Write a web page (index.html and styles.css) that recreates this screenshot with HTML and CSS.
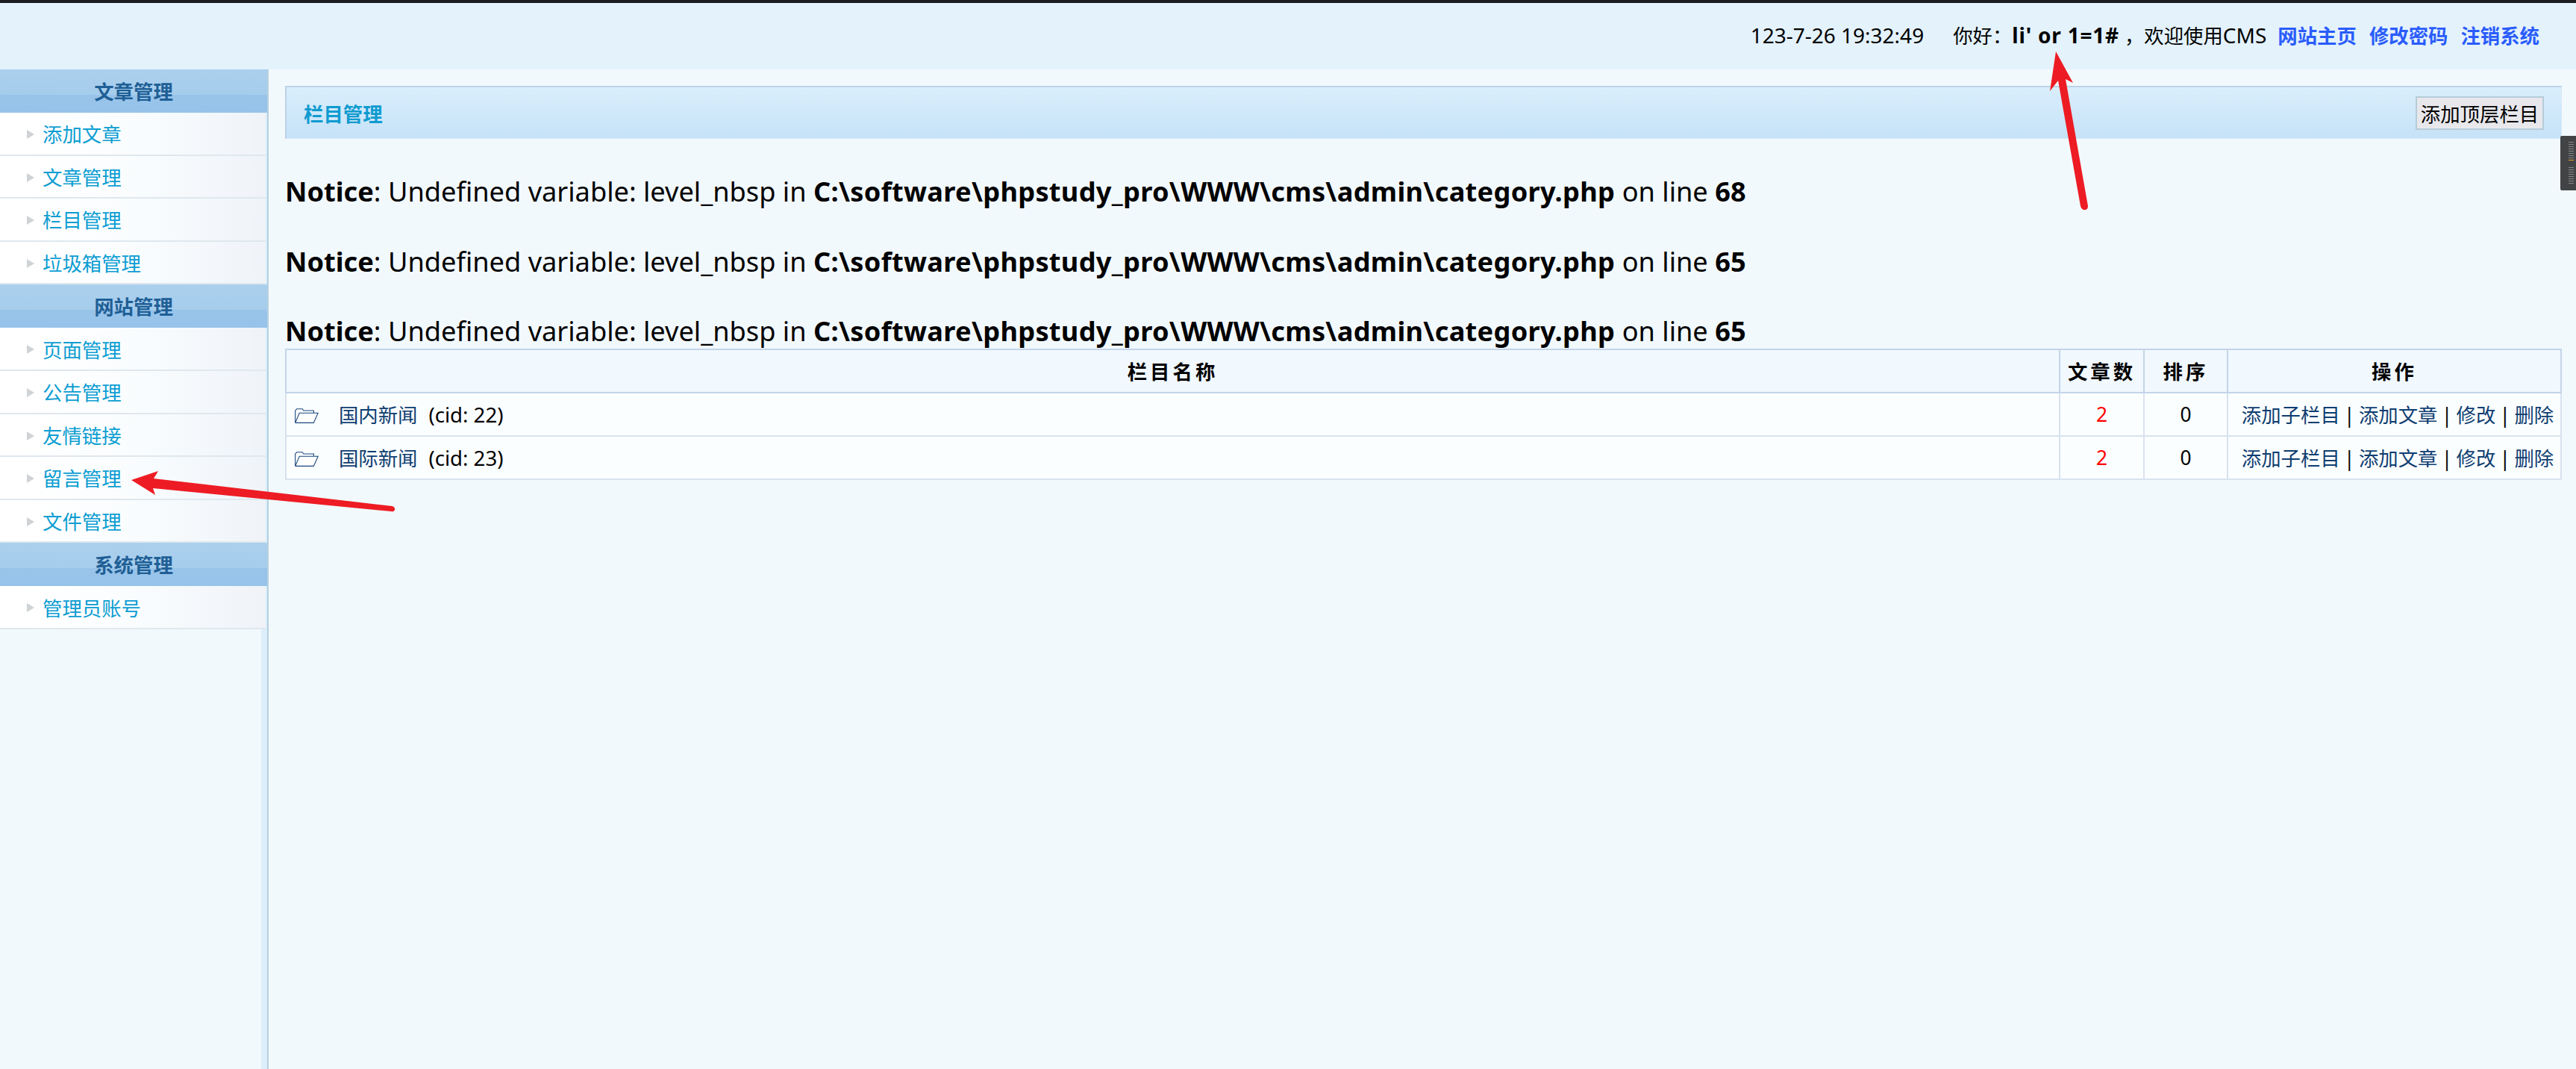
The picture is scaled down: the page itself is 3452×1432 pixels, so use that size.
FILE: index.html
```html
<!DOCTYPE html>
<html lang="zh">
<head>
<meta charset="utf-8">
<title>栏目管理</title>
<link rel="stylesheet" href="styles.css">
</head>
<body>
<header class="topbar">
  <span class="clock">123-7-26 19:32:49</span>
  <span class="greet">你好：<b class="lat">li' or 1=1#</b> ，欢迎使用<span class="lat">CMS</span></span>
  <nav class="toplinks"><a>网站主页</a><a>修改密码</a><a>注销系统</a></nav>
</header>
<div class="main">
  <aside class="side">
    <h3 class="side-head">文章管理</h3>
    <a class="side-item">添加文章</a>
    <a class="side-item">文章管理</a>
    <a class="side-item">栏目管理</a>
    <a class="side-item">垃圾箱管理</a>
    <h3 class="side-head">网站管理</h3>
    <a class="side-item">页面管理</a>
    <a class="side-item">公告管理</a>
    <a class="side-item">友情链接</a>
    <a class="side-item">留言管理</a>
    <a class="side-item">文件管理</a>
    <h3 class="side-head">系统管理</h3>
    <a class="side-item">管理员账号</a>
  </aside>
  <main class="content">
    <div class="panel">
      <span class="panel-title">栏目管理</span>
      <button class="panel-btn">添加顶层栏目</button>
    </div>
    <p class="notice"><b>Notice</b>: Undefined variable: level_nbsp in <b class="path">C:\software\phpstudy_pro\WWW\cms\admin\category.php</b> on line <b>68</b></p>
    <p class="notice"><b>Notice</b>: Undefined variable: level_nbsp in <b class="path">C:\software\phpstudy_pro\WWW\cms\admin\category.php</b> on line <b>65</b></p>
    <p class="notice"><b>Notice</b>: Undefined variable: level_nbsp in <b class="path">C:\software\phpstudy_pro\WWW\cms\admin\category.php</b> on line <b>65</b></p>
    <table class="grid">
      <colgroup><col><col class="c-num"><col class="c-ord"><col class="c-act"></colgroup>
      <thead>
        <tr><th>栏目名称</th><th>文章数</th><th>排序</th><th>操作</th></tr>
      </thead>
      <tbody>
        <tr>
          <td class="name">
            <svg class="folder" viewBox="0 0 32 20"><path d="M.7 19.4V3.2L2.6.7h7.6l1.6 2.3h13.6v3.2M.7 19.4h24.6L31.2 6.2H6.2L.7 19.4" fill="#fff" stroke="#17467c" stroke-width="1.1"/></svg>
            <a class="cat">国内新闻</a><span class="cid">(cid: 22)</span>
          </td>
          <td class="count">2</td><td class="center">0</td>
          <td class="center acts"><a>添加子栏目</a> | <a>添加文章</a> | <a>修改</a> | <a>删除</a></td>
        </tr>
        <tr>
          <td class="name">
            <svg class="folder" viewBox="0 0 32 20"><path d="M.7 19.4V3.2L2.6.7h7.6l1.6 2.3h13.6v3.2M.7 19.4h24.6L31.2 6.2H6.2L.7 19.4" fill="#fff" stroke="#17467c" stroke-width="1.1"/></svg>
            <a class="cat">国际新闻</a><span class="cid">(cid: 23)</span>
          </td>
          <td class="count">2</td><td class="center">0</td>
          <td class="center acts"><a>添加子栏目</a> | <a>添加文章</a> | <a>修改</a> | <a>删除</a></td>
        </tr>
      </tbody>
    </table>
  </main>
</div>
<div class="handle">
  <i></i><i></i><i></i><i></i><i></i><i></i><i></i><i></i><i class="mark"></i><i class="space"></i><i></i><i></i><i></i><i></i><i></i><i></i><i></i><i></i>
</div>
<svg class="arrows" viewBox="0 0 3452 1432" width="3452" height="1432">
  <path d="M2755 69 2778 111 2768 106 2798 276Q2798 282 2792 281 2789 280 2788 276L2758 108 2747 122Z" fill="#ed1c24"/>
  <path d="M176 643 212 631 206 641 526 678Q530 680 529 683 528 686 524 685L205 654 208 663Z" fill="#ed1c24"/>
</svg>
</body>
</html>
```
FILE: styles.css
```css
* { box-sizing: border-box; }
html, body { margin: 0; height: 1432px; overflow: hidden; }
body {
  background: #f2f9fd;
  color: #000;
  font-family: "Noto Sans", "Noto Sans CJK SC", sans-serif;
  font-size: 26.4px;
  position: relative;
}
a { text-decoration: none; }

.topbar {
  height: 93px;
  border-top: 4px solid #1c1c20;
  background: #e4f2fc;
  display: flex;
  align-items: center;
  justify-content: flex-end;
  padding: 0 49px 4px 0;
}
.clock { margin-right: 39px; font-size: 28px; }
.greet { margin-right: 15px; }
.lat { font-size: 28px; }
.greet b { font-weight: 700; letter-spacing: .8px; }
.toplinks { display: flex; gap: 17px; }
.toplinks a { color: #2a5cfb; font-weight: 700; }

.main { display: flex; height: 1339px; }

.side {
  width: 360px;
  flex: none;
  border-right: 2px solid #b5d0dc;
  background: linear-gradient(to right, #f1f9fc 350px, #dceefa 350px);
  display: flex;
  flex-direction: column;
}
.side-head {
  margin: 0;
  height: 58px;
  flex: none;
  display: flex;
  align-items: center;
  justify-content: center;
  padding-bottom: 2px;
  background: linear-gradient(to bottom, #abd0ee 0, #a6cdec 58%, #99c4ea 58%, #96c3ea 100%);
  color: #1f5f96;
  font-size: 26.4px;
  font-weight: 700;
}
.side-item {
  height: 57.6px;
  flex: none;
  margin-right: 2px;
  border-bottom: 2px solid #dfe8ee;
  background: #fff linear-gradient(to right, #fff 10%, #f9fcfe 55%, #eff3f8 100%);
  color: #0c9dd2;
  display: flex;
  align-items: center;
  padding-left: 57px;
  position: relative;
}
.side-item::before {
  content: "";
  position: absolute;
  left: 36px;
  top: 23px;
  border-left: 10px solid #cfd3d6;
  border-top: 6px solid transparent;
  border-bottom: 6px solid transparent;
}

.content {
  flex: 1;
  min-width: 0;
  padding: 22px 19px 0 22px;
}
.panel {
  height: 71px;
  border: 1px solid #d6e8f6;
  border-top: 2px solid #bdd2e6;
  border-left: 2px solid #bdd2e6;
  background: linear-gradient(to bottom, #d9eefc, #c6e2f8);
  display: flex;
  align-items: center;
  justify-content: space-between;
  padding: 0 23px 0 23px;
}
.panel-title { color: #0f9bd0; font-weight: 700; }
.panel-btn {
  height: 45px;
  width: 172px;
  padding: 0;
  border: 2px solid #b5ccd8;
  background: #e8e8ec;
  color: #000;
  font: inherit;
  white-space: nowrap;
}

.notice {
  margin: 47px 0 0;
  font-size: 36.2px;
  line-height: 46.5px;
  white-space: nowrap;
}
.path { letter-spacing: .3px; }

.grid {
  width: 3051px;
  margin-top: 0;
  table-layout: fixed;
  border-collapse: collapse;
  border: 2px solid #c4d4e8;
}
.c-num { width: 113px; }
.c-ord { width: 112px; }
.c-act { width: 447px; }
.grid th, .grid td {
  height: 58px;
  padding: 0;
  text-align: center;
  border: 2px solid #d8e2ef;
  font-weight: 400;
}
.grid th {
  background: #f1f8fe;
  font-weight: 700;
  letter-spacing: 4px;
  border-color: #c4d4e8;
}
.grid td { background: #fbfeff; }
.grid td.name {
  text-align: left;
  padding-left: 11px;
}
.folder {
  width: 32px;
  height: 20px;
  margin-right: 20px;
  vertical-align: -1px;
}
.cat { color: #0e3d70; margin-right: 15px; }
.cid { font-size: 27.6px; }
.count { color: #f00; }
.grid td.acts { color: #000; word-spacing: -1.6px; padding-left: 9px; }
.acts a { color: #0e3d70; }

.handle {
  position: absolute;
  right: 0;
  top: 182px;
  width: 21px;
  height: 73px;
  background: #414345;
  border-radius: 2px 0 0 2px;
  display: flex;
  flex-direction: column;
  align-items: flex-end;
  gap: 2px;
  padding: 8px 3px 0 0;
}
.handle i { display: block; width: 7px; height: 1px; background: #85888a; }
.handle i.mark { background: #f0a020; }
.handle i.space { background: none; height: 5px; }

.arrows { position: absolute; left: 0; top: 0; pointer-events: none; }
```
